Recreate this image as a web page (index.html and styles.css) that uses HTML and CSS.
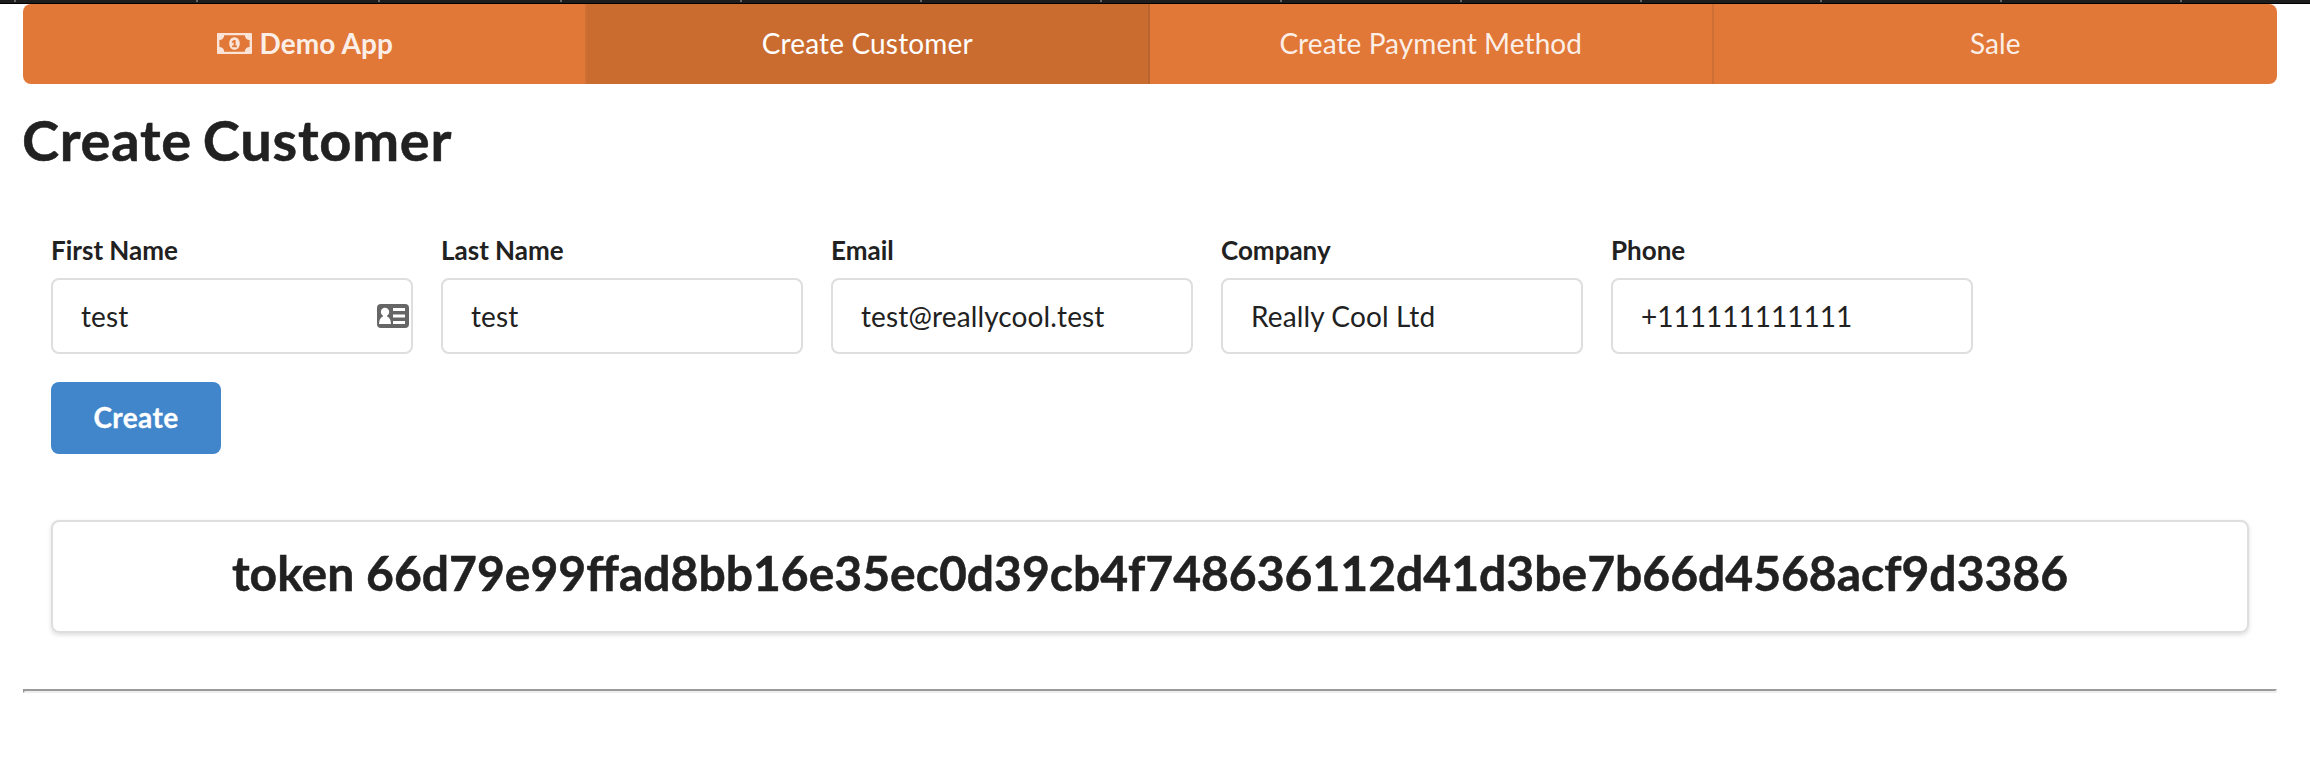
FILE: index.html
```html
<!DOCTYPE html>
<html lang="en">
<head>
<meta charset="utf-8">
<title>Demo App</title>
<link rel="stylesheet" href="styles.css">
</head>
<body>
<div class="window-edge"><i></i><i></i><i></i><i></i><i></i><i></i><i></i><i></i><i></i><i></i><i></i><i></i><i></i></div>
<main class="page">
  <nav class="menu">
    <a class="item brand">
      <svg class="money" viewBox="0 0 35 21"><path fill-rule="evenodd" d="M1 0h33Q35 0 35 1v19Q35 21 34 21H1Q0 21 0 20V1Q0 0 1 0zM7.200 2.300A4.800 4.800 0 0 1 2.400 7.100v6.800a4.800 4.800 0 0 1 4.800 4.800h20.600a4.800 4.800 0 0 1 4.800-4.800V7.100a4.800 4.800 0 0 1-4.800-4.800z"/><path fill-rule="evenodd" d="M17.500 4.200c3.200 0 5.300 2.800 5.300 6.300s-2.100 6.300-5.300 6.300-5.300-2.800-5.300-6.300 2.100-6.300 5.300-6.300zM16.900 6.900l-2.400 1.800 1 1.300 1.100-.8v3.300h-1.500v1.700h4.900v-1.700h-1.400V6.900z"/></svg>
      <b>Demo App</b>
    </a>
    <a class="item active">Create Customer</a>
    <a class="item">Create Payment Method</a>
    <a class="item">Sale</a>
  </nav>
  <h1 class="title">Create Customer</h1>
  <form class="form">
    <div class="fields">
      <div class="field"><label>First Name</label><div class="input">test<svg class="card" viewBox="0 0 32 24"><rect width="32" height="24" rx="4" fill="#666"/><g fill="#fff"><circle cx="8" cy="8" r="4.200"/><path d="M6 10h4v2.500q4 1.500 4 7.500H2q0-6 4-7.500zM16 4h12v3H16zM16 10.500h12v3H16zM16 17h12v3H16z"/></g></svg></div></div>
      <div class="field"><label>Last Name</label><div class="input">test</div></div>
      <div class="field"><label>Email</label><div class="input">test@reallycool.test</div></div>
      <div class="field"><label>Company</label><div class="input">Really Cool Ltd</div></div>
      <div class="field"><label>Phone</label><div class="input phone">+111111111111</div></div>
    </div>
    <button type="button" class="button">Create</button>
  </form>
  <section class="segment"><h2 class="token">token 66d79e99ffad8bb16e35ec0d39cb4f748636112d41d3be7b66d4568acf9d3386</h2></section>
  <div class="divider"></div>
</main>
</body>
</html>
```
FILE: styles.css
```css
* { box-sizing: border-box; }
body {
  margin: 0;
  background: #fff;
  color: #212121;
  font: 28px/40px Lato, "Liberation Sans", sans-serif;
}
.window-edge {
  display: flex;
  gap: 178px;
  height: 4px;
  padding-left: 14px;
  overflow: hidden;
  background: linear-gradient(#1d1d1d 3px, #000 3px);
}
.window-edge i { flex: none; width: 2px; height: 2px; background: #666; }
.window-edge i:nth-child(-n+3) { margin-right: 2px; }
.page { width: 2254px; margin-left: 23px; }
.menu {
  display: grid;
  grid-template-columns: repeat(4, 1fr);
  height: 80px;
  border-radius: 8px;
  overflow: hidden;
  background: #e27838;
  color: rgba(255, 255, 255, .9);
}
.item {
  display: flex;
  align-items: center;
  justify-content: center;
  padding-bottom: 2px;
  border-right: 2px solid rgba(34, 36, 38, .1);
  letter-spacing: .08px;
}
.item:last-child { border-right: 0; }
.active { background: #ca6c2f; color: #fff; letter-spacing: .15px; }
.brand { gap: 8px; padding-left: 2px; letter-spacing: .1px; }
.money { width: 35px; height: 25px; fill: #fff; opacity: .8; }
.title {
  margin: 20px 0 0 -1px;
  font-size: 56px;
  line-height: 72px;
  font-weight: 700;
  letter-spacing: .75px;
  word-spacing: -3.5px;
  -webkit-text-stroke: .5px #212121;
}
.form { padding: 57px 28px 0; }
.fields { display: flex; gap: 28px; }
.field { width: 362px; }
.field label {
  display: block;
  margin-bottom: 11px;
  font-size: 26px;
  line-height: 34px;
  font-weight: 700;
}
.input {
  display: flex;
  align-items: center;
  justify-content: space-between;
  height: 76px;
  padding: 0 2px 0 28px;
  border: 2px solid #dededf;
  border-radius: 8px;
  letter-spacing: .13px;
}
.phone { letter-spacing: 0; }
.card { width: 32px; height: 24px; }
.button {
  display: block;
  width: 170px;
  height: 72px;
  margin-top: 28px;
  padding: 0 0 2px;
  border: 0;
  border-radius: 8px;
  background: #4186cb;
  color: #fff;
  font: 700 28px/28px Lato, sans-serif;
  letter-spacing: .4px;
  -webkit-text-stroke: .3px #fff;
}
.segment {
  margin: 66px 28px 0;
  height: 113px;
  padding-top: 21px;
  border: 2px solid #dededf;
  border-radius: 8px;
  box-shadow: 0 2px 4px rgba(34, 36, 38, .15);
  text-align: center;
}
.token {
  margin: 0;
  font-size: 48.05px;
  line-height: 60px;
  font-weight: 700;
  -webkit-text-stroke: .5px #212121;
}
.divider {
  height: 4px;
  margin-top: 56px;
  border: 2px solid;
  border-color: #9a9a9a #eee #eee #9a9a9a;
}
```
